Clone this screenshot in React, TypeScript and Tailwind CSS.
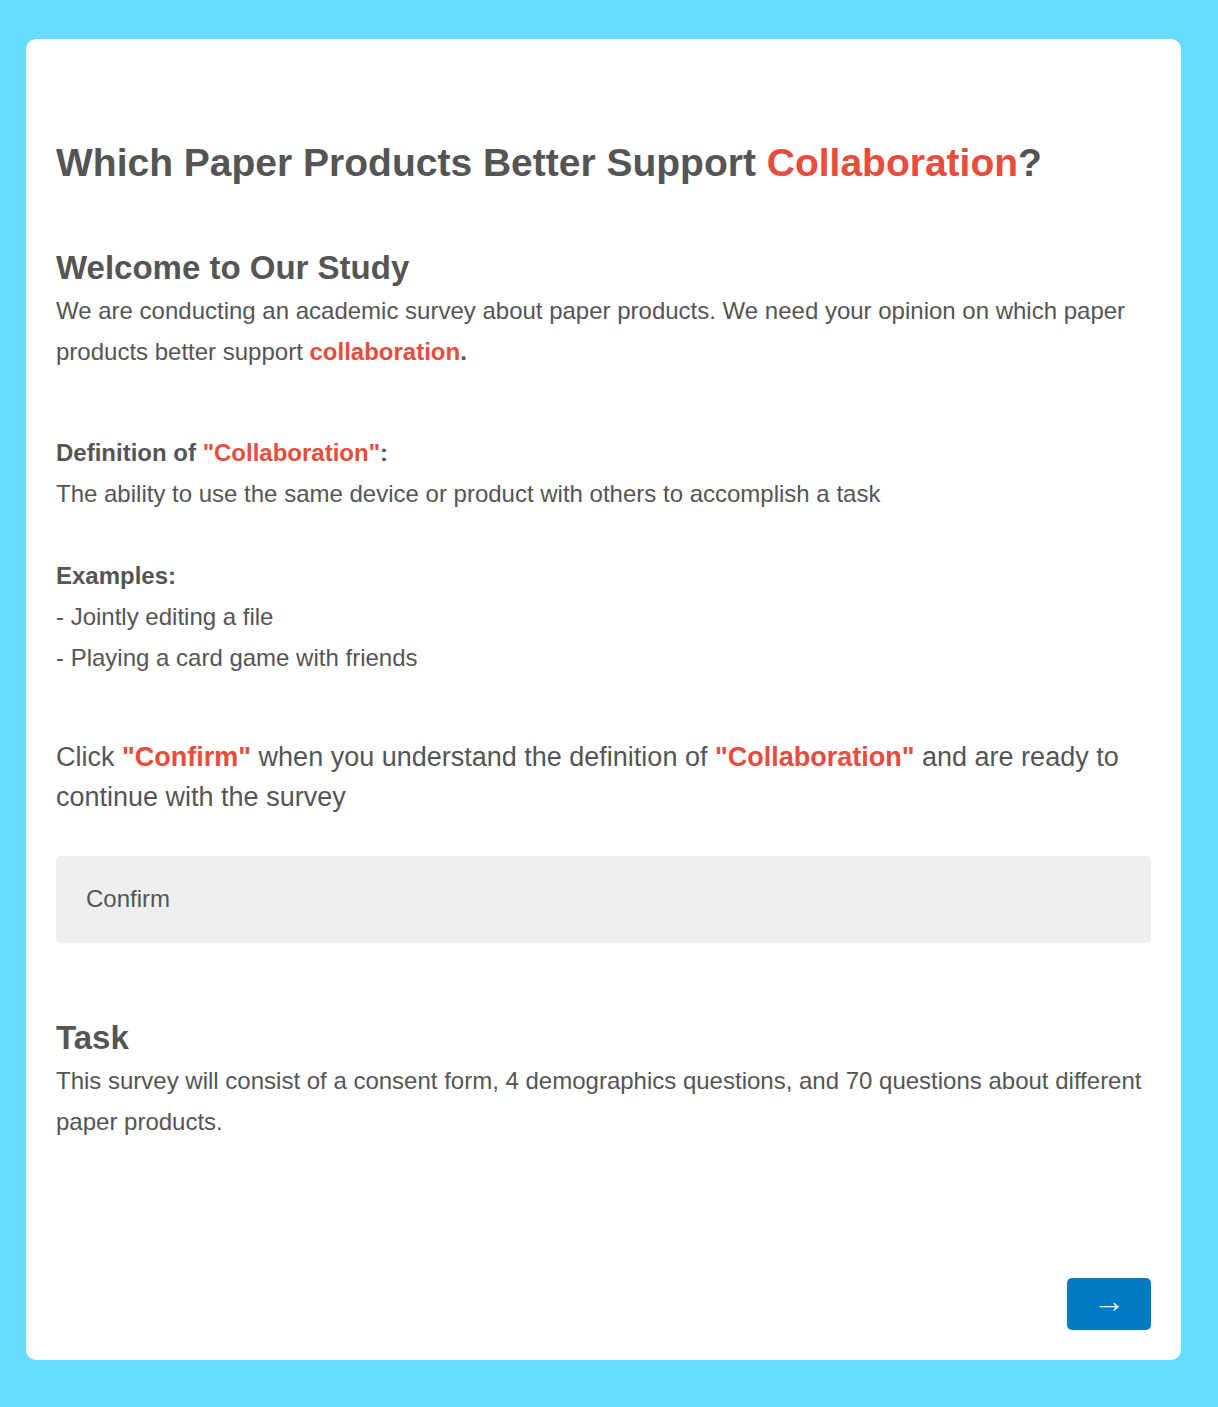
import React from "react";

export default function App() {
  const red = "text-[#e74c3c]";
  return (
    <div className="min-h-[1407px] bg-[#66ddff] pt-[39px] pb-[47px] font-['Liberation_Sans',Arial,sans-serif] text-[#555555]">
      <div className="ml-[26px] w-[1155px] rounded-[10px] bg-white px-[30px] pt-[101px] pb-[30px]">
        {/* Title */}
        <h1 className="text-[39px] font-bold leading-[46px]">
          Which Paper Products Better Support <span className={red}>Collaboration</span>?
        </h1>

        {/* Intro */}
        <h2 className="mt-[64px] text-[33px] font-bold leading-[36px]">Welcome to Our Study</h2>
        <p className="mt-[3.5px] text-[24px] leading-[41px]">
          We are conducting an academic survey about paper products. We need your opinion on which paper products better support{" "}
          <span className={`font-bold ${red}`}>collaboration</span>
          <span className="font-bold">.</span>
        </p>

        {/* Definition */}
        <div className="mt-[60px] text-[24px] leading-[41px]">
          <p className="font-bold">
            Definition of <span className={red}>"Collaboration"</span>:
          </p>
          <p>The ability to use the same device or product with others to accomplish a task</p>
          <p className="mt-[41px] font-bold">Examples:</p>
          <p>- Jointly editing a file</p>
          <p>- Playing a card game with friends</p>
        </div>

        {/* Confirm question */}
        <p className="mt-[59px] text-[27px] leading-[40px]">
          Click <span className={`font-bold ${red}`}>"Confirm"</span> when you understand the definition of{" "}
          <span className={`font-bold ${red}`}>"Collaboration"</span> and are ready to continue with the survey
        </p>
        <div className="mt-[39px] flex h-[87px] items-center rounded-[5px] bg-[#efefef] px-[30px] text-[24px]">
          Confirm
        </div>

        {/* Task */}
        <h2 className="mt-[77px] text-[33px] font-bold leading-[36px]">Task</h2>
        <p className="mt-[4.5px] text-[24px] leading-[41px]">
          This survey will consist of a consent form, 4 demographics questions, and 70 questions about different paper products.
        </p>

        <div className="mt-[135.5px] flex justify-end">
          <button className="flex h-[52px] w-[84px] items-center justify-center rounded-[5px] bg-[#007ac1] pb-[5px] text-[32px] leading-none text-white">
            →
          </button>
        </div>
      </div>
    </div>
  );
}
